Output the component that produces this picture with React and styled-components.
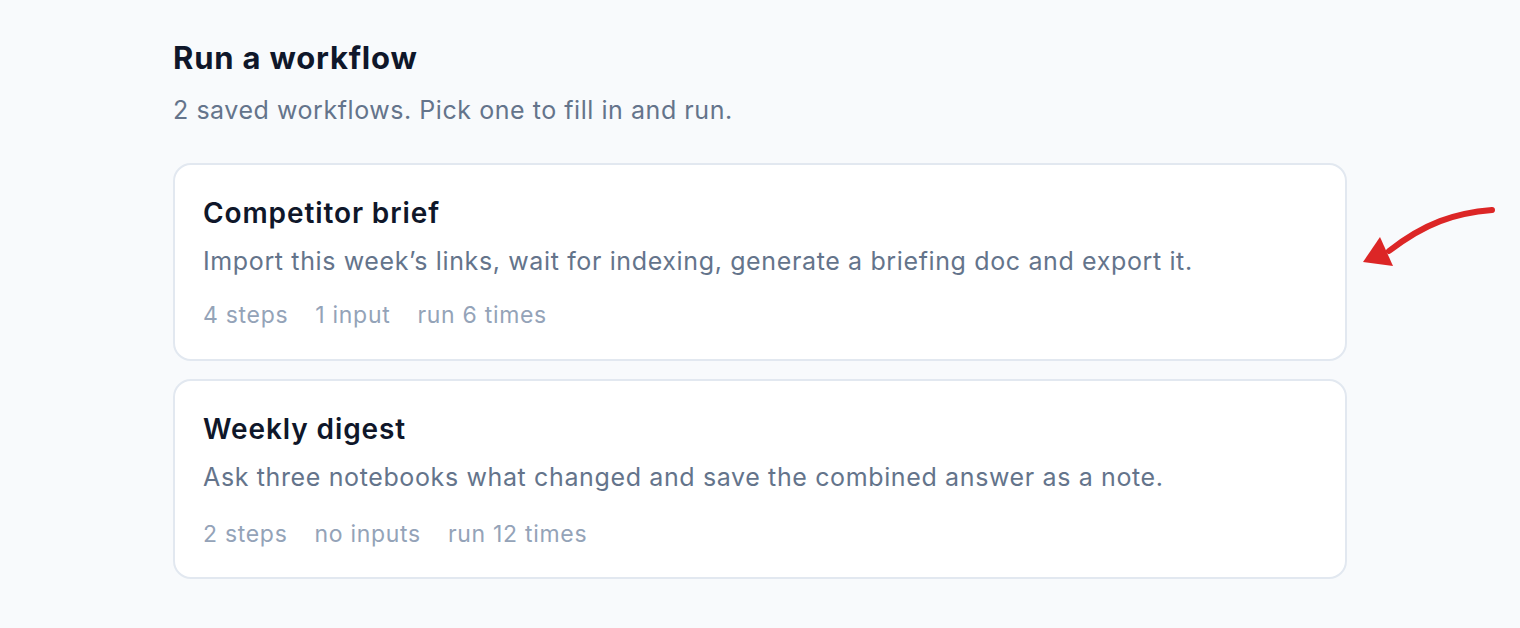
import React from 'react';
import styled, { createGlobalStyle } from 'styled-components';

const Global = createGlobalStyle`
  html, body {
    margin: 0;
    padding: 0;
    background: #f8fafc;
    font-family: Inter, "Noto Sans", sans-serif;
    -webkit-font-smoothing: antialiased;
  }
`;

const Page = styled.main`
  position: relative;
  min-height: 628px;
  padding: 38px 0 0 173px;
  box-sizing: border-box;
`;

const Header = styled.header`
  margin-bottom: 37px;
`;

const Title = styled.h1`
  margin: 0;
  font-size: 31px;
  font-weight: 700;
  color: #0f172a;
  letter-spacing: 0.8px;
  line-height: 40px;
`;

const Subtitle = styled.p`
  margin: 16px 0 0;
  font-size: 25px;
  color: #64748b;
  letter-spacing: 0.55px;
  line-height: 32px;
`;

const List = styled.div`
  display: flex;
  flex-direction: column;
  gap: 18px;
  width: 1174px;
`;

const Card = styled.article`
  background: #fff;
  border: 2px solid #e2e8f0;
  border-radius: 18px;
  padding: 30px 28px 0;
  box-sizing: border-box;
  height: ${p => p.$h}px;
`;

const Name = styled.h2`
  margin: 0;
  font-size: 28px;
  font-weight: 600;
  color: #0f172a;
  letter-spacing: 0.9px;
  line-height: 36px;
`;

const Desc = styled.p`
  margin: 14px 0 0;
  font-size: 25px;
  color: #64748b;
  letter-spacing: 0.63px;
  line-height: 32px;
`;

const Meta = styled.div`
  display: flex;
  gap: 27px;
  margin-top: ${p => p.$mt}px;
  font-size: 23px;
  color: #94a3b8;
  letter-spacing: 0.7px;
  line-height: 30px;
`;

const Arrow = styled.svg`
  position: absolute;
  left: 1355px;
  top: 195px;
`;

const workflows = [
  {
    name: 'Competitor brief',
    desc: 'Import this week\u2019s links, wait for indexing, generate a briefing doc and export it.',
    meta: ['4 steps', '1 input', 'run 6 times'],
    h: 198,
    mt: 23,
  },
  {
    name: 'Weekly digest',
    desc: 'Ask three notebooks what changed and save the combined answer as a note.',
    meta: ['2 steps', 'no inputs', 'run 12 times'],
    h: 200,
    mt: 26,
  },
];

export default function App() {
  return (
    <>
      <Global />
      <Page>
        <Header>
          <Title>Run a workflow</Title>
          <Subtitle>2 saved workflows. Pick one to fill in and run.</Subtitle>
        </Header>
        <List>
          {workflows.map(w => (
            <Card key={w.name} $h={w.h}>
              <Name>{w.name}</Name>
              <Desc>{w.desc}</Desc>
              <Meta $mt={w.mt}>
                {w.meta.map(m => <span key={m}>{m}</span>)}
              </Meta>
            </Card>
          ))}
        </List>
        <Arrow width="150" height="80" viewBox="0 0 150 80">
          <path d="M137 15 C 100 18, 70 28, 34 56" fill="none" stroke="#dc2626" strokeWidth="6" strokeLinecap="round" />
          <polygon points="8,67 25,42 38,71" fill="#dc2626" />
        </Arrow>
      </Page>
    </>
  );
}
